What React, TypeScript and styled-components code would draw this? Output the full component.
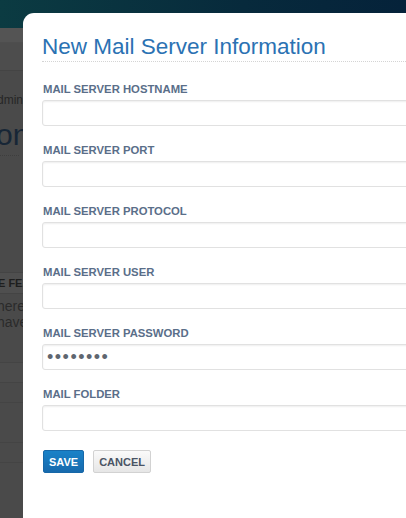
import React from "react";
import styled, { createGlobalStyle } from "styled-components";

const Global = createGlobalStyle`
  html, body { margin: 0; padding: 0; }
  body {
    width: 406px;
    height: 518px;
    overflow: hidden;
    background: #4a4a4a;
    font-family: "Liberation Sans", Arial, sans-serif;
  }
`;

const Page = styled.div`
  position: relative;
  width: 406px;
  height: 518px;
  overflow: hidden;
  background: #4a4a4a;
`;

const TopBar = styled.div`
  height: 28px;
  background: linear-gradient(90deg, #0b3b42 0%, #072a3c 60%, #05223a 100%);
`;

const SubBar = styled.div`
  height: 14px;
  background: #545454;
  border-bottom: 1px solid #4e4e4e;
`;

const SubBar2 = styled.div`
  height: 27px;
  background: #4d4d4d;
  border-bottom: 1px solid #444;
`;

const Crumb = styled.div`
  padding: 22px 0 0 0;
  height: 20px;
  font-size: 12px;
  color: #262626;
  margin-left: -3px;
`;

const BigTitle = styled.div`
  font-size: 30px;
  color: #172636;
  line-height: 36px;
  margin-top: 4px;
  margin-left: -4px;
  padding-bottom: 2px;
  border-bottom: 1px dotted #3e3e3e;
  width: 23px;
`;

const Spacer = styled.div<{ h: number }>`
  height: ${(p) => p.h}px;
`;

const Band = styled.div`
  height: 20px;
  background: #4f4f4f;
  border-top: 1px solid #444;
  border-bottom: 1px solid #444;
  font-size: 11px;
  font-weight: bold;
  line-height: 20px;
  color: #1e1e1e;
  white-space: nowrap;
  margin-left: -2px;
`;

const BgText = styled.div`
  font-size: 14px;
  line-height: 16px;
  color: #2a2a2a;
  white-space: nowrap;
  padding-top: 4px;
  margin-left: -3px;
`;

const Line = styled.div<{ mt: number; tone?: string }>`
  margin-top: ${(p) => p.mt}px;
  height: 19px;
  border-top: 1px solid ${(p) => p.tone || "#444"};
  background: ${(p) => (p.tone ? "#4c4c4c" : "transparent")};
`;

const Modal = styled.div`
  position: absolute;
  left: 23px;
  top: 13px;
  right: -40px;
  bottom: -20px;
  background: #fff;
  border-top-left-radius: 11px;
  padding: 20px 0 0 19px;
  box-sizing: border-box;
`;

const Title = styled.h3`
  margin: 0;
  font-family: "Liberation Sans", Arial, sans-serif;
  font-weight: normal;
  font-size: 22.5px;
  line-height: 28px;
  color: #2b72b3;
  border-bottom: 1px dotted #d4d4d4;
`;

const Form = styled.form`
  display: flex;
  flex-direction: column;
  padding-top: 20px;
`;

const Field = styled.div`
  display: flex;
  flex-direction: column;
  margin-bottom: 17px;
`;

const Label = styled.label`
  font-size: 11.3px;
  font-weight: bold;
  color: #5a6e89;
  line-height: 14px;
  margin-bottom: 4px;
  padding-left: 1px;
`;

const Input = styled.input`
  box-sizing: border-box;
  height: 26px;
  width: 420px;
  border: 1px solid #e1e1e1;
  border-radius: 3px;
  background: #fff;
  box-shadow: inset 0 1px 2px rgba(0, 0, 0, 0.07);
  padding: 0 4px;
  font-family: "Liberation Sans", Arial, sans-serif;
  font-size: 18px;
  color: #5f6670;
  letter-spacing: 1.5px;
  outline: none;
`;

const Actions = styled.div`
  display: flex;
  gap: 9px;
  margin-top: 2px;
  padding-left: 1px;
`;

const Button = styled.button<{ primary?: boolean }>`
  height: 23px;
  box-sizing: border-box;
  padding: 0 5px;
  border-radius: 2px;
  font-family: "Liberation Sans", Arial, sans-serif;
  font-size: 11px;
  font-weight: bold;
  cursor: pointer;
  border: 1px solid ${(p) => (p.primary ? "#1768a8" : "#d2d2d2")};
  color: ${(p) => (p.primary ? "#fff" : "#4a5464")};
  background: ${(p) =>
    p.primary
      ? "linear-gradient(#1a82c8, #176aad)"
      : "linear-gradient(#fafafa, #e6e6e6)"};
`;

export default function App() {
  return (
    <>
      <Global />
      <Page>
        <TopBar />
        <SubBar />
        <SubBar2 />
        <Crumb>dmin</Crumb>
        <BigTitle>on</BigTitle>
        <Spacer h={116} />
        <Band>E FEATURES</Band>
        <BgText>
          here
          <br />
          have
        </BgText>
        <Line mt={32} tone="#444" />
        <Line mt={0} />
        <Line mt={0} />
        <Line mt={20} />
        <Line mt={0} />
        <Modal>
          <Title>New Mail Server Information</Title>
          <Form onSubmit={(e) => e.preventDefault()}>
            <Field>
              <Label>MAIL SERVER HOSTNAME</Label>
              <Input type="text" />
            </Field>
            <Field>
              <Label>MAIL SERVER PORT</Label>
              <Input type="text" />
            </Field>
            <Field>
              <Label>MAIL SERVER PROTOCOL</Label>
              <Input type="text" />
            </Field>
            <Field>
              <Label>MAIL SERVER USER</Label>
              <Input type="text" />
            </Field>
            <Field>
              <Label>MAIL SERVER PASSWORD</Label>
              <Input type="password" defaultValue="password" />
            </Field>
            <Field>
              <Label>MAIL FOLDER</Label>
              <Input type="text" />
            </Field>
            <Actions>
              <Button primary type="submit">SAVE</Button>
              <Button type="button">CANCEL</Button>
            </Actions>
          </Form>
        </Modal>
      </Page>
    </>
  );
}
